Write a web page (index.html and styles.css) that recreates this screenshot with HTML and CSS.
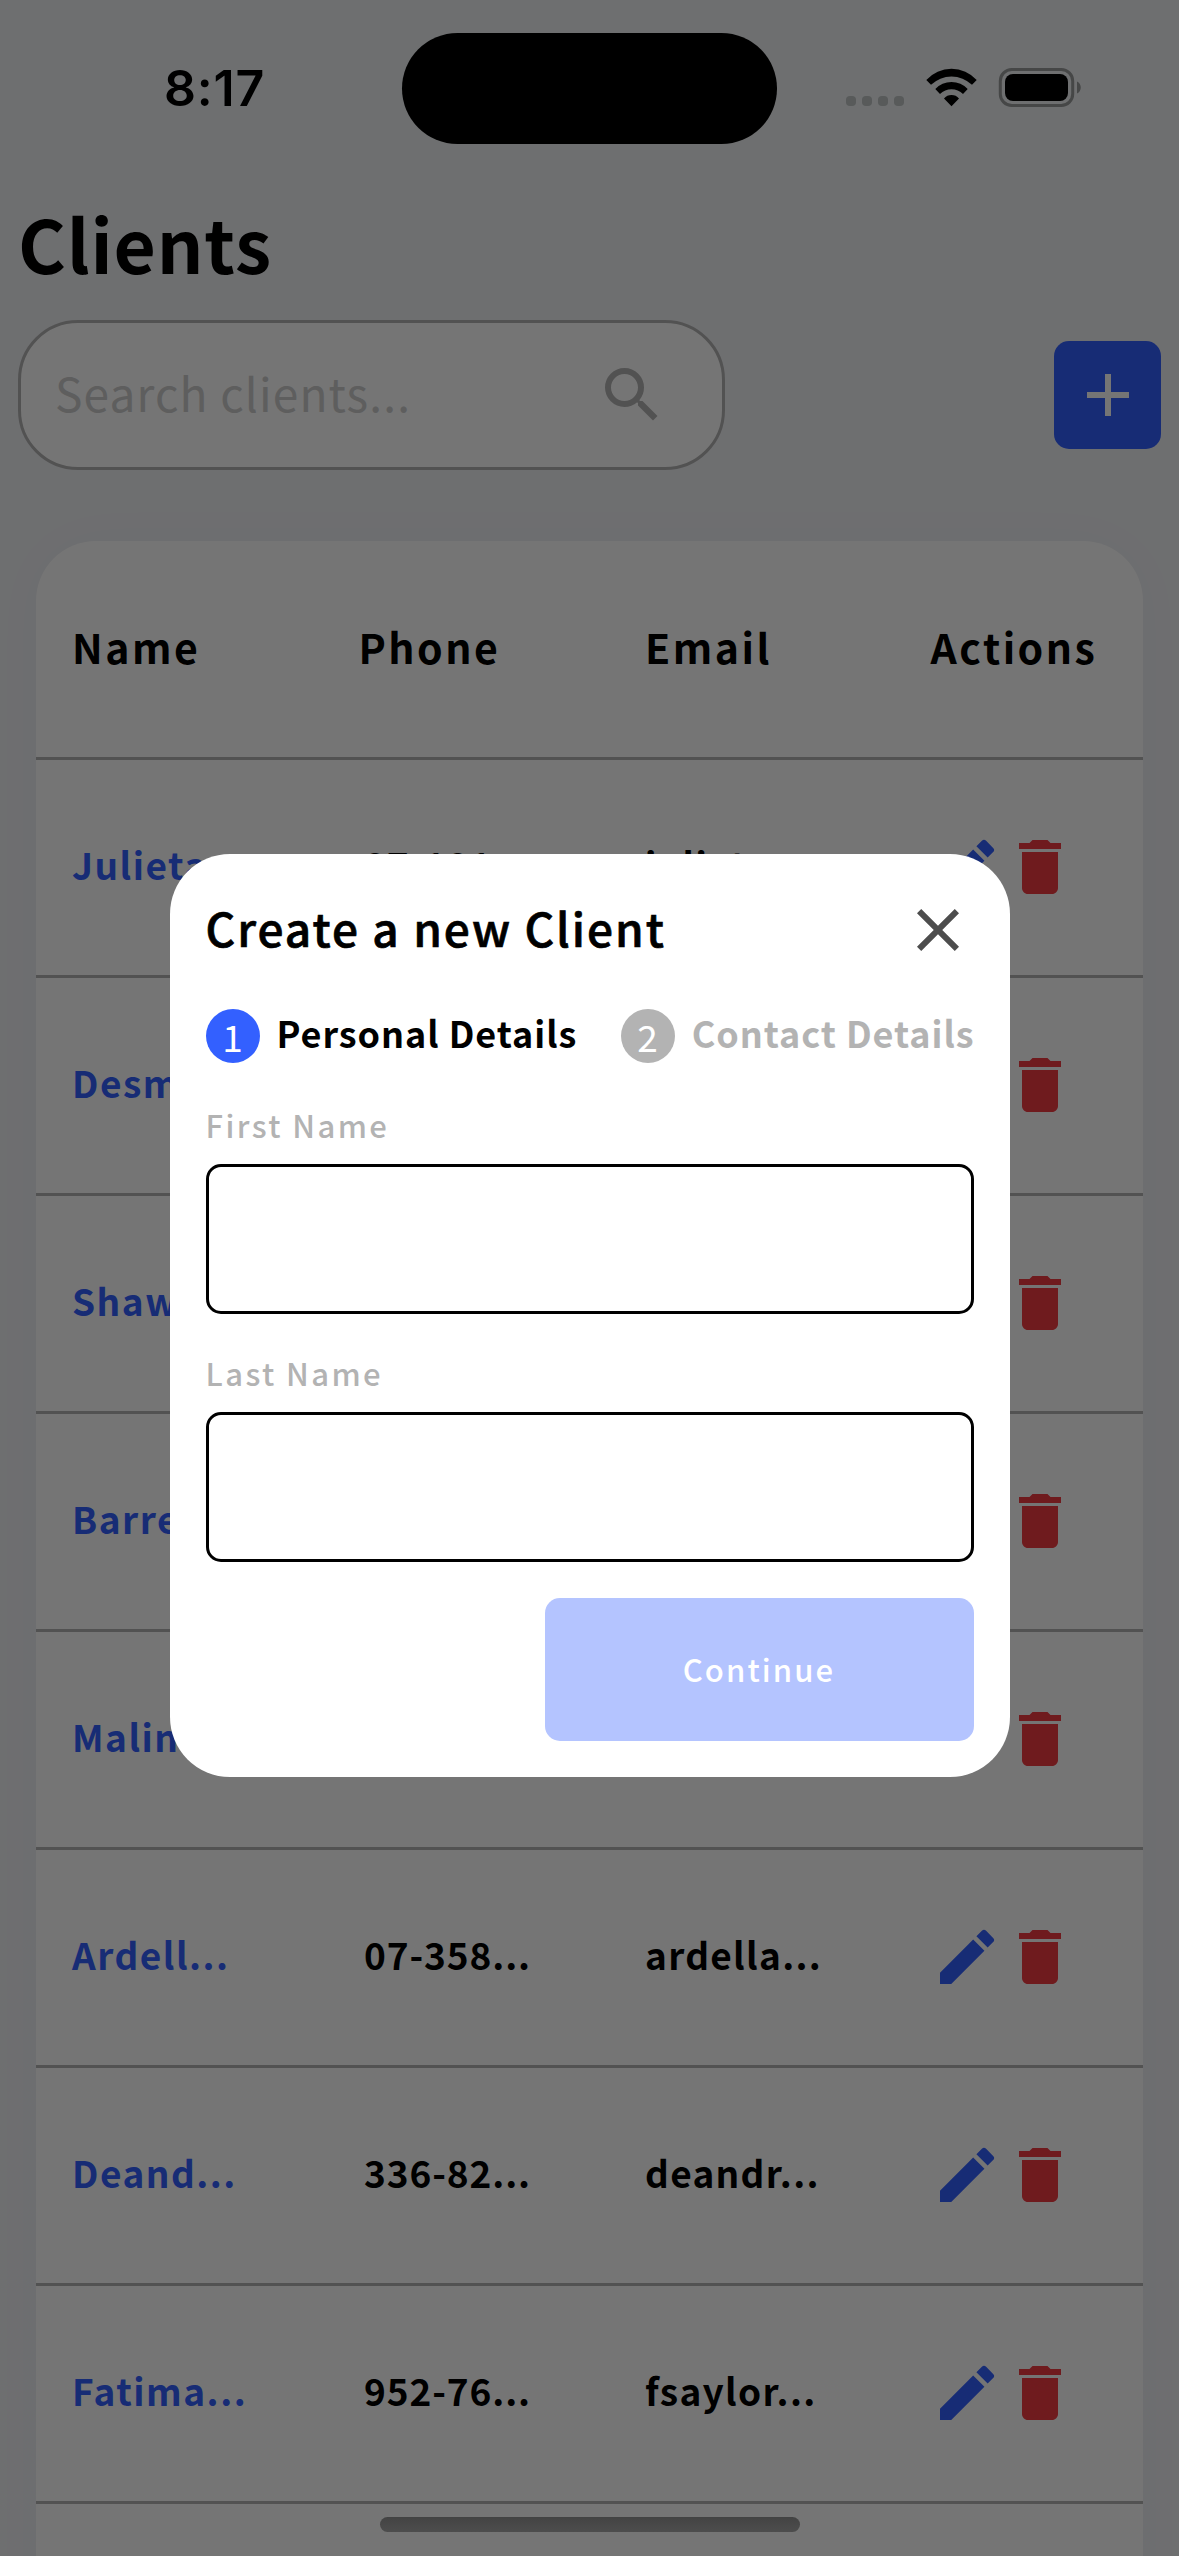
FILE: index.html
```html
<!DOCTYPE html>
<html lang="en">
<head>
<meta charset="utf-8">
<title>Clients</title>
<link rel="stylesheet" href="styles.css">
</head>
<body>
<svg class="sprite" aria-hidden="true">
  <symbol id="edit" viewBox="0 0 24 24"><path d="M3 17.25V21h3.75L17.81 9.94l-3.75-3.75L3 17.25zM20.71 7.04a1 1 0 0 0 0-1.41l-2.34-2.34a1 1 0 0 0-1.41 0l-1.83 1.83 3.75 3.75 1.83-1.83z"/></symbol>
  <symbol id="delete" viewBox="0 0 24 24"><path d="M6 19c0 1.1.9 2 2 2h8c1.1 0 2-.9 2-2V7H6v12zM19 4h-3.5l-1-1h-5l-1 1H5v2h14V4z"/></symbol>
  <symbol id="search" viewBox="0 0 24 24"><path d="M15.5 14h-.79l-.28-.27A6.47 6.47 0 0 0 16 9.5 6.5 6.5 0 1 0 9.5 16c1.61 0 3.09-.59 4.23-1.57l.27.28v.79l5 4.99L20.49 19l-4.99-5zm-6 0C7.01 14 5 11.99 5 9.5S7.01 5 9.5 5 14 7.01 14 9.5 11.99 14 9.5 14z"/></symbol>
  <symbol id="add" viewBox="0 0 24 24"><path d="M19 13h-6v6h-2v-6H5v-2h6V5h2v6h6v2z"/></symbol>
  <symbol id="close" viewBox="0 0 24 24"><path d="M19 6.41L17.59 5 12 10.59 6.41 5 5 6.41 10.59 12 5 17.59 6.41 19 12 13.41 17.59 19 19 17.59 13.41 12z"/></symbol>
</svg>
<div class="screen">
  <header class="status-bar">
    <span class="clock">8:17</span>
    <span class="island"></span>
    <svg class="status-icons" viewBox="0 0 236 40">
      <g fill="#585a5a"><rect x="0" y="28" width="10" height="10" rx="4"/><rect x="16" y="28" width="10" height="10" rx="4"/><rect x="32" y="28" width="10" height="10" rx="4"/><rect x="48" y="28" width="10" height="10" rx="4"/></g>
      <path d="M80.3 12A34 34 0 0 1 130.7 12L126 16.8A29.5 29.5 0 0 0 85 16.8ZM89.3 21A22 22 0 0 1 121.7 21L117 26A16.2 16.2 0 0 0 94 26ZM98 30.5A10 10 0 0 1 113 30.5L105.5 38.3Z"/>
      <rect x="154.3" y="1.5" width="72.4" height="36" rx="11.5" fill="none" stroke="#464747" stroke-width="3"/>
      <rect x="159" y="6" width="63" height="27" rx="8"/>
      <path d="M231 13.500C236 15.500 236 23.500 231 25.500Z" fill="#464747"/>
    </svg>
  </header>

  <main class="page">
    <h1 class="title">Clients</h1>
    <div class="toolbar">
      <div class="search"><span class="placeholder">Search clients...</span><svg class="icon"><use href="#search"/></svg></div>
      <button class="add"><svg class="icon"><use href="#add"/></svg></button>
    </div>
    <section class="table">
      <div class="row head"><span>Name</span><span>Phone</span><span>Email</span><span>Actions</span></div>
      <div class="row"><span class="name">Julieta...</span><span class="phone">07-101...</span><span class="email">julieta...</span><span class="actions"><svg class="icon edit"><use href="#edit"/></svg><svg class="icon delete"><use href="#delete"/></svg></span></div>
      <div class="row"><span class="name">Desm...</span><span class="phone"></span><span class="email"></span><span class="actions"><svg class="icon edit"><use href="#edit"/></svg><svg class="icon delete"><use href="#delete"/></svg></span></div>
      <div class="row"><span class="name">Shaw...</span><span class="phone"></span><span class="email"></span><span class="actions"><svg class="icon edit"><use href="#edit"/></svg><svg class="icon delete"><use href="#delete"/></svg></span></div>
      <div class="row"><span class="name">Barre...</span><span class="phone"></span><span class="email"></span><span class="actions"><svg class="icon edit"><use href="#edit"/></svg><svg class="icon delete"><use href="#delete"/></svg></span></div>
      <div class="row"><span class="name">Malin...</span><span class="phone"></span><span class="email"></span><span class="actions"><svg class="icon edit"><use href="#edit"/></svg><svg class="icon delete"><use href="#delete"/></svg></span></div>
      <div class="row"><span class="name">Ardell...</span><span class="phone">07-358...</span><span class="email">ardella...</span><span class="actions"><svg class="icon edit"><use href="#edit"/></svg><svg class="icon delete"><use href="#delete"/></svg></span></div>
      <div class="row"><span class="name">Deand...</span><span class="phone">336-82...</span><span class="email">deandr...</span><span class="actions"><svg class="icon edit"><use href="#edit"/></svg><svg class="icon delete"><use href="#delete"/></svg></span></div>
      <div class="row"><span class="name">Fatima...</span><span class="phone">952-76...</span><span class="email">fsaylor...</span><span class="actions"><svg class="icon edit"><use href="#edit"/></svg><svg class="icon delete"><use href="#delete"/></svg></span></div>
    </section>
  </main>

  <div class="scrim">
    <section class="dialog">
      <div class="dialog-head"><h2 class="dialog-title">Create a new Client</h2><svg class="icon"><use href="#close"/></svg></div>
      <div class="steps">
        <div class="step current"><span class="badge">1</span><span class="step-name">Personal Details</span></div>
        <div class="step"><span class="badge">2</span><span class="step-name">Contact Details</span></div>
      </div>
      <label class="field"><span class="label">First Name</span><input class="input" type="text"></label>
      <label class="field"><span class="label">Last Name</span><input class="input" type="text"></label>
      <button class="continue">Continue</button>
    </section>
  </div>
  <div class="home-indicator"></div>
</div>
</body>
</html>
```
FILE: styles.css
```css
* { box-sizing: border-box; }
body { margin: 0; font-family: "Noto Sans CJK JP", "Noto Sans", sans-serif; color: #000; }
h1, h2 { margin: 0; }
button { border: 0; padding: 0; font-family: inherit; }
.sprite { position: absolute; width: 0; height: 0; }
.icon { display: block; width: 72px; height: 72px; flex: none; fill: currentColor; }

.screen { position: relative; width: 1179px; height: 2556px; overflow: hidden; background: #f0f1f5; }

/* Status bar stays above the modal scrim */
.status-bar { position: relative; z-index: 2; height: 197px; display: flex; align-items: flex-start; }
.clock { width: 402px; padding: 57px 0 0 164px; font: 600 50px/62px Inter, sans-serif; letter-spacing: 0.8px; }
.island { width: 375px; height: 111px; margin-top: 33px; border-radius: 56px; background: #000; }
.status-icons { width: 236px; height: 40px; margin: 68px 0 0 69px; }

.page { padding: 0 18px; }
.title { font-size: 73px; line-height: 90px; font-weight: 700; letter-spacing: 0.8px; }
.toolbar { display: flex; justify-content: space-between; align-items: center; margin: 33px 0 71px; }
.search { width: 707px; height: 150px; display: flex; justify-content: space-between; align-items: center; padding: 0 54px 0 34px; border: 3px solid #b3b3b3; border-radius: 60px; background: #fff; color: #b3b3b3; }
.placeholder { font-size: 46px; line-height: 60px; padding-bottom: 6px; color: #cccccc; letter-spacing: 1.15px; }
.add { width: 107px; height: 108px; display: flex; align-items: center; justify-content: center; border-radius: 15px; background: #3360ff; color: #fff; }

.table { margin: 0 18px; height: 2100px; border-radius: 60px 60px 0 0; background: #fff; box-shadow: 0 0 60px rgba(0, 0, 0, 0.025); }
.row { height: 218px; display: grid; grid-template-columns: 286.5px 286.5px 285.5px 1fr; align-items: center; padding-left: 36px; border-bottom: 3px solid #b3b3b3; font-size: 37px; line-height: 54px; font-weight: 700; letter-spacing: 1.5px; }
.row > span { padding-bottom: 7px; }
.row > .actions { display: flex; padding: 0 0 2px; gap: 1px; }
.head { height: 219px; font-size: 41px; letter-spacing: 2.5px; }
.head > span { padding-bottom: 6px; }
.name, .edit { color: #3360ff; }
.delete { color: #f13b43; }
.row > .phone { width: 178px; text-align: center; letter-spacing: 0.9px; }
.email { letter-spacing: 1.3px; }

.scrim { position: absolute; inset: 0; z-index: 1; display: flex; align-items: flex-start; justify-content: center; padding-top: 854px; background: rgba(0, 0, 0, 0.54); }
.dialog { width: 840px; height: 923px; padding: 40px 36px 36px; display: flex; flex-direction: column; border-radius: 60px; background: #fff; }
.dialog-head { display: flex; justify-content: space-between; color: #4d4d4d; }
.dialog-title { font-size: 46px; line-height: 66px; font-weight: 500; color: #000; letter-spacing: 2px; -webkit-text-stroke: 0.7px #000; }
.steps { display: flex; justify-content: space-between; margin: 43px 0 39px; }
.step { display: flex; align-items: center; gap: 17px; height: 54px; color: #b3b3b3; }
.badge { width: 54px; height: 54px; border-radius: 50%; background: #b3b3b3; color: #fff; text-align: center; font-size: 37px; line-height: 54px; }
.step-name { font-size: 36px; line-height: 48px; font-weight: 700; padding-bottom: 8px; letter-spacing: 0.95px; margin-right: -1px; }
.current { color: #000; }
.current .badge { background: #3360ff; }
.field { display: flex; flex-direction: column; gap: 17px; margin-bottom: 36px; }
.label { font-size: 31px; line-height: 45px; font-weight: 500; color: #b3b3b3; letter-spacing: 2.4px; }
.input { width: 100%; height: 150px; border: 3px solid #000; border-radius: 15px; background: #fff; }
.continue { align-self: flex-end; width: 429px; height: 143px; padding-bottom: 2px; border-radius: 15px; background: #b4c4ff; color: #fff; font-size: 31px; font-weight: 500; letter-spacing: 2.1px; }

.home-indicator { position: absolute; z-index: 2; left: 380px; top: 2517px; width: 420px; height: 15px; border-radius: 8px; background: linear-gradient(#434343, #4d4d4d); }
```
